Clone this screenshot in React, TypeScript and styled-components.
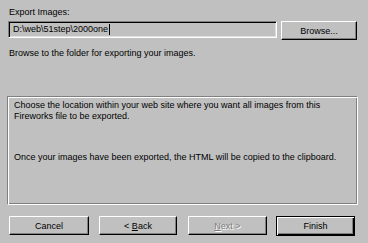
import React from "react";
import styled, { createGlobalStyle } from "styled-components";

const Global = createGlobalStyle`
  html, body { margin: 0; padding: 0; background: #c0c0c0; }
  body { font-family: "Liberation Sans", Arial, sans-serif; }
`;

const Dialog = styled.div`
  width: 368px;
  height: 243px;
  box-sizing: border-box;
  background: #c0c0c0;
  padding: 5px 10px 0 8px;
  font-family: "Liberation Sans", Arial, sans-serif;
  font-size: 9px;
  color: #000;
  display: flex;
  flex-direction: column;
`;

const Label = styled.div`
  height: 14px;
  line-height: 14px;
  margin-left: 1px;
`;

const PathRow = styled.div`
  display: flex;
  gap: 4px;
  margin-top: 2px;
`;

const Input = styled.div`
  width: 269px;
  height: 17px;
  box-sizing: border-box;
  border-top: 1px solid #808080;
  border-left: 1px solid #808080;
  border-right: 1px solid #fff;
  border-bottom: 1px solid #fff;
  box-shadow: inset 1px 1px 0 #000, inset -1px -1px 0 #dfdfdf;
  padding: 0 4px;
  line-height: 15px;
  display: flex;
  align-items: center;
`;

const Caret = styled.span`
  display: inline-block;
  width: 1px;
  height: 11px;
  background: #000;
  margin-left: 1px;
`;

const Button = styled.div<{ $default?: boolean; $disabled?: boolean; $w?: number; $ml?: number }>`
  width: ${(p) => p.$w ?? 80}px;
  height: ${(p) => (p.$default ? 20 : 19)}px;
  margin-left: ${(p) => p.$ml ?? 0}px;
  box-sizing: border-box;
  display: flex;
  align-items: center;
  justify-content: center;
  white-space: pre;
  background: #c0c0c0;
  border-top: 1px solid ${(p) => (p.$default ? "#000" : "#fff")};
  border-left: 1px solid ${(p) => (p.$default ? "#000" : "#fff")};
  border-right: 1px solid #000;
  border-bottom: 1px solid #000;
  box-shadow: ${(p) =>
    p.$default
      ? "inset 1px 1px 0 #fff, inset -1px -1px 0 #000, inset -2px -2px 0 #808080"
      : "inset -1px -1px 0 #808080"};
  color: ${(p) => (p.$disabled ? "#808080" : "#000")};
  text-shadow: ${(p) => (p.$disabled ? "1px 1px 0 #fff" : "none")};
`;

const Hint = styled.div`
  margin-top: 7px;
  margin-left: 1px;
  line-height: 12px;
`;

const Group = styled.div`
  margin-top: 37px;
  margin-left: -1px;
  width: 351px;
  height: 109px;
  box-sizing: border-box;
  border-top: 1px solid #808080;
  border-left: 1px solid #808080;
  border-right: 1px solid #fff;
  border-bottom: 1px solid #fff;
  box-shadow: inset 1px 1px 0 #fff, inset -1px -1px 0 #808080;
  padding: 3px 6px;
`;

const Para = styled.p<{ $gap?: number }>`
  margin: ${(p) => p.$gap ?? 0}px 0 0 0;
  line-height: 11px;
`;

const Footer = styled.div`
  display: flex;
  align-items: flex-start;
  margin-top: 11px;
  margin-left: 1px;
`;

const U = styled.span`
  text-decoration: underline;
`;

export default function App() {
  return (
    <>
      <Global />
      <Dialog>
        <Label>Export Images:</Label>
        <PathRow>
          <Input>
            D:\web\51step\2000one
            <Caret />
          </Input>
          <Button $w={76}>Browse...</Button>
        </PathRow>
        <Hint>Browse to the folder for exporting your images.</Hint>
        <Group>
          <Para>
            Choose the location within your web site where you want all images from this
            <br />
            Fireworks file to be exported.
          </Para>
          <Para $gap={30}>
            Once your images have been exported, the HTML will be copied to the clipboard.
          </Para>
        </Group>
        <Footer>
          <Button>Cancel</Button>
          <Button $w={78} $ml={10}>
            {"< "}
            <U>B</U>ack
          </Button>
          <Button $disabled $w={79} $ml={11}>
            <U>N</U>
            {"ext >"}
          </Button>
          <Button $default $w={79} $ml={9}>
            Finish
          </Button>
        </Footer>
      </Dialog>
    </>
  );
}
